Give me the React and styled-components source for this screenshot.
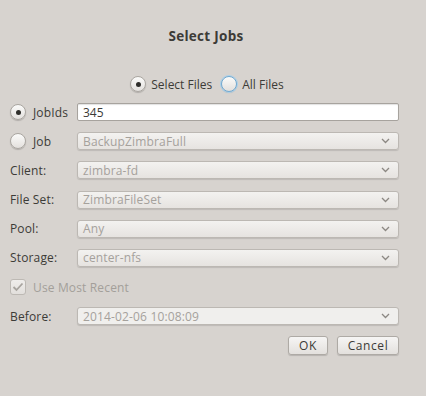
import React, { useState } from 'react';
import styled, { createGlobalStyle } from 'styled-components';

const GlobalStyle = createGlobalStyle`
  html, body {
    margin: 0;
    padding: 0;
    background: #d7d3cf;
  }
  body {
    font-family: "Open Sans", "DejaVu Sans", sans-serif;
    font-size: 12px;
    color: #3c3b37;
  }
`;

const Dialog = styled.div`
  width: 426px;
  height: 396px;
  box-sizing: border-box;
  background: #d7d3cf;
  padding-top: 26px;
`;

const Title = styled.div`
  text-align: center;
  font-weight: bold;
  font-size: 13.5px;
  letter-spacing: 0.3px;
  padding-right: 14px;
  height: 20px;
  line-height: 20px;
`;

const ModeRow = styled.div`
  display: flex;
  justify-content: center;
  align-items: center;
  gap: 9px;
  margin-top: 29px;
  padding-right: 12px;
  height: 18px;
`;

const ModeOption = styled.label`
  display: flex;
  align-items: center;
  gap: 5px;
`;

const Form = styled.div`
  display: grid;
  grid-template-columns: 67px 322px;
  grid-auto-rows: 18px;
  row-gap: 11.2px;
  align-items: center;
  padding: 0 27px 0 10px;
  margin-top: 10px;
  letter-spacing: 0.15px;
`;

const Label = styled.div`
  display: flex;
  align-items: center;
  gap: 7px;
  white-space: nowrap;
  color: ${(p) => (p.$disabled ? '#a39f9a' : '#3c3b37')};
`;

const RadioCircle = styled.span`
  width: 16px;
  height: 16px;
  flex: none;
  box-sizing: border-box;
  border-radius: 50%;
  border: 1px solid ${(p) => (p.$focus ? '#6fa9d2' : '#aaa6a1')};
  background: linear-gradient(#fbfbfa, #e3e0dd);
  box-shadow: ${(p) =>
    p.$focus
      ? '0 0 0 1px #a9d0ea, 0 1px 1px rgba(0,0,0,0.15)'
      : '0 1px 1px rgba(0,0,0,0.18)'};
  display: flex;
  align-items: center;
  justify-content: center;
  &::after {
    content: '';
    width: 5px;
    height: 5px;
    border-radius: 50%;
    background: #2f2e2b;
    display: ${(p) => (p.$checked ? 'block' : 'none')};
  }
`;

const TextInput = styled.input`
  box-sizing: border-box;
  width: 322px;
  height: 18px;
  border: 1px solid #a7a39e;
  border-radius: 2px;
  background: #fff;
  box-shadow: inset 0 1px 1px rgba(0,0,0,0.12);
  font: inherit;
  color: #3c3b37;
  padding: 0 5px;
  outline: none;
`;

const Combo = styled.div`
  box-sizing: border-box;
  width: 322px;
  height: 18px;
  border: 1px solid #bcb8b3;
  border-radius: 3px;
  background: ${(p) =>
    p.$flat ? '#f0efed' : 'linear-gradient(#f3f2f0, #e6e3e0)'};
  box-shadow: 0 1px 1px rgba(0,0,0,0.12);
  display: flex;
  align-items: center;
  justify-content: space-between;
  padding: 0 8px 0 5px;
  color: #a5a19c;
`;

const CheckRow = styled.div`
  grid-column: 1 / span 2;
  display: flex;
  align-items: center;
  gap: 7px;
  color: #a39f9a;
`;

const CheckBox = styled.span`
  width: 16px;
  height: 16px;
  box-sizing: border-box;
  border: 1px solid #bdb9b4;
  border-radius: 3px;
  background: linear-gradient(#efedeb, #e2dfdc);
  display: flex;
  align-items: center;
  justify-content: center;
`;

const Buttons = styled.div`
  grid-column: 1 / span 2;
  display: flex;
  justify-content: flex-end;
  gap: 9px;
`;

const Button = styled.button`
  box-sizing: border-box;
  height: 19px;
  min-width: ${(p) => p.$w}px;
  border: 1px solid #aeaaa5;
  border-radius: 3px;
  background: linear-gradient(#f6f5f4, #e3e0dd);
  box-shadow: 0 1px 1px rgba(0,0,0,0.15);
  font: inherit;
  color: #3c3b37;
  padding: 0 8px;
  letter-spacing: 0.6px;
`;

const Chevron = () => (
  <svg width="9" height="6" viewBox="0 0 9 6">
    <path d="M1 1 L4.5 4.5 L8 1" fill="none" stroke="#8c8883" strokeWidth="1.3" />
  </svg>
);

const Radio = ({ checked, focus, children }) => (
  <ModeOption>
    <RadioCircle $checked={checked} $focus={focus} />
    {children}
  </ModeOption>
);

const Select = ({ value, flat }) => (
  <Combo $flat={flat}>
    <span>{value}</span>
    <Chevron />
  </Combo>
);

export default function App() {
  const [jobIds, setJobIds] = useState('345');

  return (
    <Dialog>
      <GlobalStyle />
      <Title>Select Jobs</Title>
      <ModeRow>
        <Radio checked>Select Files</Radio>
        <Radio focus>All Files</Radio>
      </ModeRow>
      <Form>
        <Label>
          <RadioCircle $checked />
          JobIds
        </Label>
        <TextInput value={jobIds} onChange={(e) => setJobIds(e.target.value)} />

        <Label>
          <RadioCircle />
          Job
        </Label>
        <Select value="BackupZimbraFull" />

        <Label>Client:</Label>
        <Select value="zimbra-fd" />

        <Label>File Set:</Label>
        <Select value="ZimbraFileSet" />

        <Label>Pool:</Label>
        <Select value="Any" />

        <Label>Storage:</Label>
        <Select value="center-nfs" />

        <CheckRow>
          <CheckBox>
            <svg width="12" height="10" viewBox="0 0 12 10">
              <path d="M1.5 5 L4.5 8 L10.5 1.5" fill="none" stroke="#a8a49f" strokeWidth="1.8" />
            </svg>
          </CheckBox>
          Use Most Recent
        </CheckRow>

        <Label>Before:</Label>
        <Select value="2014-02-06 10:08:09" flat />

        <Buttons>
          <Button $w={40}>OK</Button>
          <Button $w={62}>Cancel</Button>
        </Buttons>
      </Form>
    </Dialog>
  );
}
